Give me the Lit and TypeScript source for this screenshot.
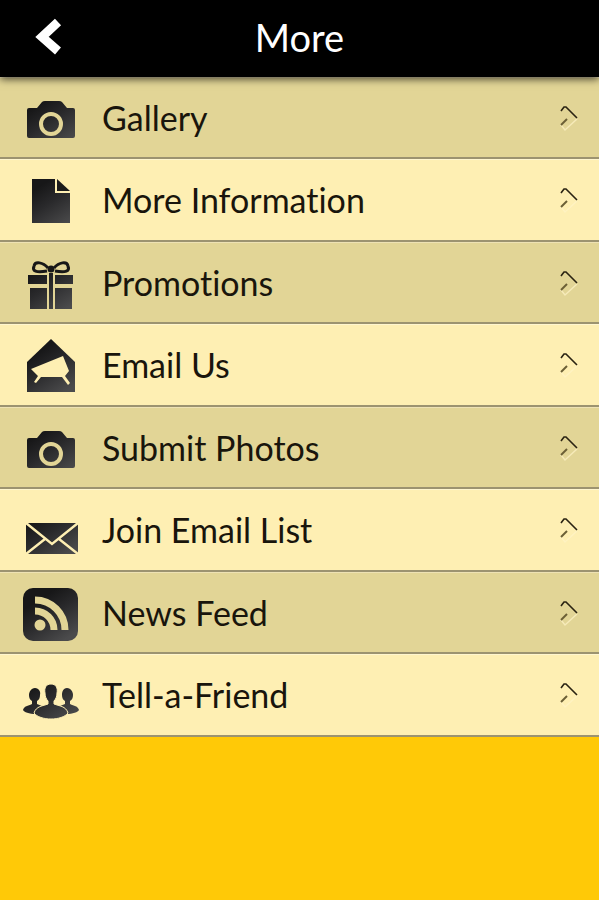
import { LitElement, html, svg, css, TemplateResult } from "lit";
import { customElement, property } from "lit/decorators.js";

const shade = "url(#shade)";

const camera = svg`
  <path fill=${shade} d="M6 18H14L19 12Q20 11 22 11H36Q38 11 39 12L44 18H50Q52 18 52 20V46Q52 48 50 48H6Q4 48 4 46V20Q4 18 6 18Z"/>
  <circle cx="28" cy="34" r="10" fill="none" stroke="var(--row)" stroke-width="4"/>`;

const icons: Record<string, TemplateResult> = {
  camera,
  page: svg`
    <path fill=${shade} d="M9 7H32V21H47V51H9Z"/>
    <path fill="#1b1b1b" d="M34 7L47 19H34Z"/>`,
  gift: svg`
    <path fill=${shade} d="M5 20H24V29H5ZM32 20H50V29H32ZM7 33H24V54H7ZM32 33H49V54H32ZM26 18H30V54H26Z"/>
    <g fill="none" stroke="#171717" stroke-width="3">
      <path d="M25 13C20 7 12 6 11 11C9 16 13 18 24 16"/>
      <path d="M31 13C36 7 44 6 45 11C47 16 43 18 32 16"/>
    </g>
    <circle cx="28" cy="14" r="3.5" fill="#171717"/>`,
  letter: svg`
    <path fill=${shade} d="M28 2L52 25V55H4V25Z"/>
    <path fill="var(--row)" d="M8 32L40 19L46 34L42 39L47 46L45 48L39 40H18L13 46L11 45L15 39Z"/>`,
  envelope: svg`
    <path fill=${shade} d="M3 21H55V52H3Z"/>
    <path fill="none" stroke="var(--row)" stroke-width="2.4" d="M3 21L29 42L55 21M3 52L22 37M55 52L36 37"/>`,
  feed: svg`
    <rect y="3" width="55" height="53" rx="10" fill=${shade}/>
    <circle cx="17" cy="40" r="5.5" fill="var(--row)"/>
    <path fill="none" stroke="var(--row)" stroke-width="7" d="M12 26A19 19 0 0 1 31 45M12 15A30 30 0 0 1 42 45"/>`,
  people: svg`
    <g fill=${shade}>
      <path d="M12 21C16 21 18 25 17 28C17 31 16 33 14 34V37L19 39L14 45L13 47C6 47 1 45 0 43C1 39 5 39 9 37V34C7 33 6 31 6 28C6 25 8 21 12 21Z"/>
      <path d="M44 21C48 21 50 25 50 28C50 31 49 33 47 34V37C51 39 55 39 56 43C55 45 50 47 43 47L42 45L37 39L42 37V34C40 33 39 31 39 28C39 25 40 21 44 21Z"/>
    </g>
    <path fill=${shade} stroke="var(--row)" d="M28 17C33 17 35 21 34 26C34 29 33 32 31 34V37C36 39 43 39 45 46C42 50 35 52 28 52C21 52 14 50 11 46C13 39 20 39 25 37V34C23 32 22 29 22 26C21 21 23 17 28 17Z"/>`,
};

@customElement("menu-row")
export class MenuRow extends LitElement {
  @property() label = "";
  @property() icon = "";

  static styles = css`
    :host { display: block; height: 100%; }
    .row {
      box-sizing: border-box;
      display: flex;
      align-items: center;
      height: 100%;
      padding: 0 20px 0 23px;
      border-top: 1px solid var(--edge);
      border-bottom: 2px solid #9c9370;
      background: var(--row);
      color: #19150c;
      text-decoration: none;
      font: 34px/40px Lato, "Open Sans", sans-serif;
      font-variant-ligatures: none;
    }
    .icon { flex: none; width: 56px; height: 56px; }
    .label { flex: 1; margin-left: 23px; white-space: nowrap; }
    .arrow { flex: none; width: 20px; height: 28px; }
  `;

  render() {
    return html`<a class="row" href="#">
      <svg class="icon" viewBox="0 0 56 56" aria-hidden="true">
        <defs>
          <linearGradient id="shade" gradientUnits="userSpaceOnUse" x1="14" y1="16" x2="40" y2="56">
            <stop offset="0" stop-color="#171718" />
            <stop offset="0.4" stop-color="#29292b" />
            <stop offset="1" stop-color="#4b4b4c" />
          </linearGradient>
        </defs>
        ${icons[this.icon]}
      </svg>
      <span class="label">${this.label}</span>
      <svg class="arrow" viewBox="0 0 20 28" fill="none" aria-hidden="true">
        <path d="M18 15L6 26L2 21L7 16" stroke="#fff3c8" stroke-width="1.5" opacity="0.7" />
        <path d="M2 7L5 3H7L18 14" stroke="#2a2312" stroke-width="1.6" />
        <path d="M2 21L8 15" stroke="#6b5f35" stroke-width="2" />
      </svg>
    </a>`;
  }
}

@customElement("app-root")
export class AppRoot extends LitElement {
  private items = [
    ["Gallery", "camera"],
    ["More Information", "page"],
    ["Promotions", "gift"],
    ["Email Us", "letter"],
    ["Submit Photos", "camera"],
    ["Join Email List", "envelope"],
    ["News Feed", "feed"],
    ["Tell-a-Friend", "people"],
  ];

  static styles = css`
    :host { display: block; min-height: 100vh; background: #ffc907; }
    .bar {
      position: relative;
      display: grid;
      grid-template-columns: 100px 1fr 100px;
      align-items: center;
      height: 77px;
      background: #000;
      box-shadow: 0 2px 8px rgba(0, 0, 0, 0.7);
    }
    .back {
      justify-self: start;
      display: flex;
      margin-left: 32px;
      padding: 0 0 4px;
      border: 0;
      background: none;
    }
    .back svg { width: 32px; height: 40px; }
    .title {
      margin: 0;
      padding-bottom: 4px;
      color: #fff;
      text-align: center;
      font: 38px/44px Lato, "Open Sans", sans-serif;
    }
    .list { margin: 0; padding: 0; list-style: none; }
    .item { height: 82px; --row: #e2d596; --edge: #eee2b4; }
    .item:nth-child(even) { height: 83px; --row: #feefb3; --edge: #fff6cf; }
  `;

  render() {
    return html`
      <header class="bar">
        <button class="back" aria-label="Back">
          <svg viewBox="0 0 32 40" fill="none" aria-hidden="true">
            <path d="M26 5L10 20L26 34" stroke="#fff" stroke-width="9" />
          </svg>
        </button>
        <h1 class="title">More</h1>
      </header>
      <ul class="list">
        ${this.items.map(
          ([label, icon]) => html`<li class="item"><menu-row .label=${label} .icon=${icon}></menu-row></li>`,
        )}
      </ul>
    `;
  }
}
